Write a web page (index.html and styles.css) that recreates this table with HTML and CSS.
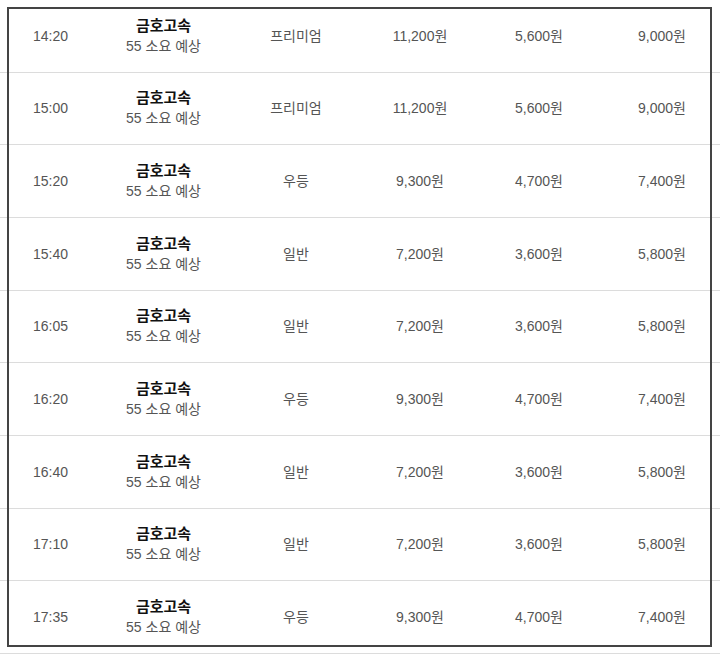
FILE: index.html
```html
<!DOCTYPE html>
<html lang="ko">
<head>
<meta charset="utf-8">
<title>시간표</title>
<link rel="stylesheet" href="styles.css">
</head>
<body>
<div class="page">
  <div class="table">
    <div class="row"><div class="cell">14:20</div><div class="cell co"><b>금호고속</b><span>55 소요 예상</span></div><div class="cell">프리미엄</div><div class="cell">11,200원</div><div class="cell">5,600원</div><div class="cell">9,000원</div></div>
    <div class="row"><div class="cell">15:00</div><div class="cell co"><b>금호고속</b><span>55 소요 예상</span></div><div class="cell">프리미엄</div><div class="cell">11,200원</div><div class="cell">5,600원</div><div class="cell">9,000원</div></div>
    <div class="row"><div class="cell">15:20</div><div class="cell co"><b>금호고속</b><span>55 소요 예상</span></div><div class="cell">우등</div><div class="cell">9,300원</div><div class="cell">4,700원</div><div class="cell">7,400원</div></div>
    <div class="row"><div class="cell">15:40</div><div class="cell co"><b>금호고속</b><span>55 소요 예상</span></div><div class="cell">일반</div><div class="cell">7,200원</div><div class="cell">3,600원</div><div class="cell">5,800원</div></div>
    <div class="row"><div class="cell">16:05</div><div class="cell co"><b>금호고속</b><span>55 소요 예상</span></div><div class="cell">일반</div><div class="cell">7,200원</div><div class="cell">3,600원</div><div class="cell">5,800원</div></div>
    <div class="row"><div class="cell">16:20</div><div class="cell co"><b>금호고속</b><span>55 소요 예상</span></div><div class="cell">우등</div><div class="cell">9,300원</div><div class="cell">4,700원</div><div class="cell">7,400원</div></div>
    <div class="row"><div class="cell">16:40</div><div class="cell co"><b>금호고속</b><span>55 소요 예상</span></div><div class="cell">일반</div><div class="cell">7,200원</div><div class="cell">3,600원</div><div class="cell">5,800원</div></div>
    <div class="row"><div class="cell">17:10</div><div class="cell co"><b>금호고속</b><span>55 소요 예상</span></div><div class="cell">일반</div><div class="cell">7,200원</div><div class="cell">3,600원</div><div class="cell">5,800원</div></div>
    <div class="row"><div class="cell">17:35</div><div class="cell co"><b>금호고속</b><span>55 소요 예상</span></div><div class="cell">우등</div><div class="cell">9,300원</div><div class="cell">4,700원</div><div class="cell">7,400원</div></div>
  </div>
  <div class="frame"></div>
</div>
</body>
</html>
```
FILE: styles.css
```css
html, body {
  margin: 0;
  padding: 0;
  background: #fff;
}
.page {
  position: relative;
  width: 720px;
  height: 655px;
  overflow: hidden;
  font-family: "Liberation Sans", "Noto Sans CJK KR", sans-serif;
  font-size: 14px;
  color: #555;
}
.table {
  display: flex;
  flex-direction: column;
}
.row {
  display: grid;
  grid-template-columns: 101px 125px 140px 108px 130px 116px;
  height: 72.67px;
  box-sizing: border-box;
  border-bottom: 1px solid #dcdcdc;
}
.cell {
  display: flex;
  align-items: center;
  justify-content: center;
  line-height: 20px;
}
.co {
  flex-direction: column;
}
.co b {
  font-size: 15px;
  font-weight: bold;
  color: #111;
}
.co span {
  color: #555;
}
.frame {
  position: absolute;
  left: 7px;
  top: 7px;
  width: 705px;
  height: 640px;
  box-sizing: border-box;
  border: 2px solid #444;
  pointer-events: none;
}
```
